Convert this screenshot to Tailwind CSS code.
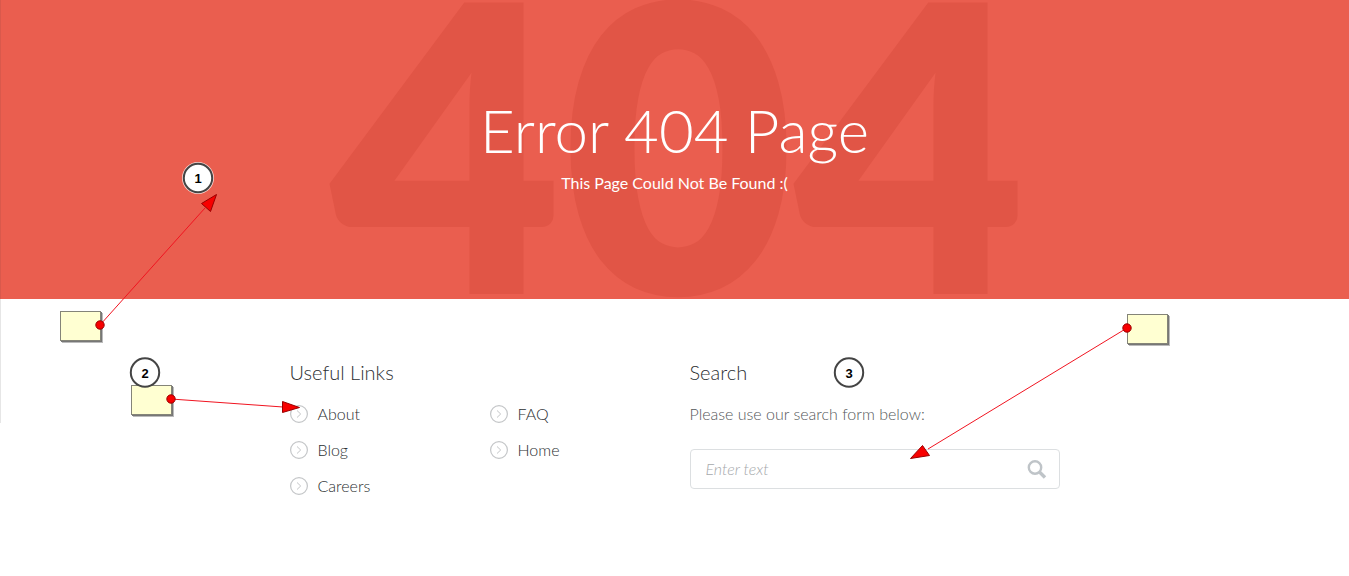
<!DOCTYPE html>
<html lang="en">

<head>
    <meta charset="UTF-8" />
    <meta name="viewport" content="width=device-width, initial-scale=1.0" />
    <title>Error 404 Page</title>
    <script src="https://cdn.jsdelivr.net/npm/@tailwindcss/browser@4"></script>
</head>

<body class="relative min-h-screen bg-white font-['Lato',sans-serif] font-light text-[#2c2f32]">

    <!-- Hero -->
    <header class="relative flex flex-col items-center overflow-hidden bg-[#ea5e4f] pt-[94px] pb-[104px] text-white">
        <div class="absolute inset-0 flex items-center justify-center pb-[22px] pl-2 text-[400px] leading-none font-extrabold text-[#e15546]" aria-hidden="true">404</div>
        <h1 class="relative text-[60px] leading-[72px]">Error 404 Page</h1>
        <p class="relative mt-[5px] text-base leading-6 font-normal">This Page Could Not Be Found :(</p>
    </header>

    <main class="mx-auto flex max-w-[770px] pt-[59px]">
        <section class="w-[400px]">
            <h2 class="text-xl leading-7">Useful Links</h2>
            <ul class="mt-4 grid grid-cols-2 gap-y-3 text-base leading-6">
                <li>
                    <a href="#about" class="flex items-center gap-2.5">
                        <svg class="h-[18px] w-[18px]" viewBox="0 0 18 18" fill="none" stroke="#c4c6c8" aria-hidden="true"><circle cx="9" cy="9" r="8.4" stroke-width="1.2"></circle><path d="M7 5.5L10.7 9L7 12.5"></path></svg>
                        About
                    </a>
                </li>
                <li>
                    <a href="#faq" class="flex items-center gap-2.5">
                        <svg class="h-[18px] w-[18px]" viewBox="0 0 18 18" fill="none" stroke="#c4c6c8" aria-hidden="true"><circle cx="9" cy="9" r="8.4" stroke-width="1.2"></circle><path d="M7 5.5L10.7 9L7 12.5"></path></svg>
                        FAQ
                    </a>
                </li>
                <li>
                    <a href="#blog" class="flex items-center gap-2.5">
                        <svg class="h-[18px] w-[18px]" viewBox="0 0 18 18" fill="none" stroke="#c4c6c8" aria-hidden="true"><circle cx="9" cy="9" r="8.4" stroke-width="1.2"></circle><path d="M7 5.5L10.7 9L7 12.5"></path></svg>
                        Blog
                    </a>
                </li>
                <li>
                    <a href="#home" class="flex items-center gap-2.5">
                        <svg class="h-[18px] w-[18px]" viewBox="0 0 18 18" fill="none" stroke="#c4c6c8" aria-hidden="true"><circle cx="9" cy="9" r="8.4" stroke-width="1.2"></circle><path d="M7 5.5L10.7 9L7 12.5"></path></svg>
                        Home
                    </a>
                </li>
                <li>
                    <a href="#careers" class="flex items-center gap-2.5">
                        <svg class="h-[18px] w-[18px]" viewBox="0 0 18 18" fill="none" stroke="#c4c6c8" aria-hidden="true"><circle cx="9" cy="9" r="8.4" stroke-width="1.2"></circle><path d="M7 5.5L10.7 9L7 12.5"></path></svg>
                        Careers
                    </a>
                </li>
            </ul>
        </section>

        <section class="flex-1">
            <h2 class="text-xl leading-7">Search</h2>
            <label for="search" class="mt-4 block text-base leading-6 text-[#55585a]">Please use our search form below:</label>
            <form class="mt-[23px] flex h-10 items-center rounded-sm border border-[#dcdfe1] pr-3 pl-[15px]">
                <input type="text" id="search" placeholder="Enter text" class="min-w-0 flex-1 text-base italic outline-none placeholder:text-[#a6a9ac]" />
                <button type="submit" aria-label="Search">
                    <svg class="h-5 w-5" viewBox="0 0 20 20" fill="none" stroke="#bfc4c8" aria-hidden="true">
                        <circle cx="8" cy="8.5" r="6.2" stroke-width="2.4"></circle>
                        <path d="M12.5 13L18 18.5" stroke-width="3.4"></path>
                    </svg>
                </button>
            </form>
        </section>
    </main>

    <!-- Callouts drawn over the page -->
    <svg class="pointer-events-none absolute top-0 left-0 h-[576px] w-full" font-family="Liberation Sans, sans-serif" font-size="13" font-weight="bold" text-anchor="middle">
        <path d="M0.5 0V299" stroke="#d9594c"></path>
        <path d="M0.5 299V423" stroke="#e6e6e6"></path>

        <g fill="#bbb">
            <rect x="62" y="313" width="41" height="30"></rect>
            <rect x="133" y="387" width="41" height="30"></rect>
            <rect x="1129" y="316" width="41" height="30"></rect>
        </g>
        <g fill="#777">
            <rect x="61" y="312" width="41" height="30"></rect>
            <rect x="132" y="386" width="41" height="30"></rect>
            <rect x="1128" y="315" width="41" height="30"></rect>
        </g>
        <g fill="#ffffd2" stroke="#848478">
            <rect x="60.500" y="311.500" width="40" height="29"></rect>
            <rect x="131.500" y="385.500" width="40" height="29"></rect>
            <rect x="1127.500" y="314.500" width="40" height="29"></rect>
        </g>

        <g stroke="#f01420" stroke-width="1">
            <path d="M100 325L205 208"></path>
            <path d="M171 399L283 407"></path>
            <path d="M1127 328L928 449"></path>
        </g>
        <g fill="#f80000" stroke="#990000" stroke-width="1">
            <path d="M216.500 194.500L201.500 203.500L210.500 211.500Z"></path>
            <path d="M299.500 407.500L282.500 401.500V412.500Z"></path>
            <path d="M910.500 458.500L922.500 445.500L929.500 455.500Z"></path>
            <circle cx="100" cy="325" r="4.200"></circle>
            <circle cx="171" cy="399" r="4.200"></circle>
            <circle cx="1127" cy="328" r="4.200"></circle>
        </g>

        <g fill="#fff" stroke="#444" stroke-width="2">
            <circle cx="198" cy="178" r="15" stroke="#f8d8d4"></circle>
            <circle cx="198" cy="178" r="14.200"></circle>
            <circle cx="145" cy="372.500" r="14.200"></circle>
            <circle cx="849" cy="372.500" r="14.200"></circle>
        </g>
        <g fill="#000">
            <text x="198" y="183">1</text>
            <text x="145" y="378">2</text>
            <text x="849" y="378">3</text>
        </g>
    </svg>
</body>

</html>
